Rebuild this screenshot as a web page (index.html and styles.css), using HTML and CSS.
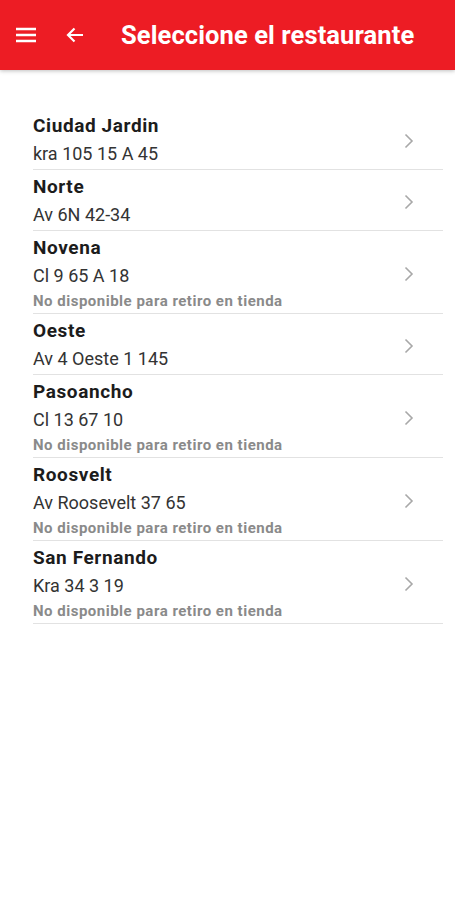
FILE: index.html
```html
<!DOCTYPE html>
<html lang="es">
<head>
  <meta charset="UTF-8">
  <meta name="viewport" content="width=device-width, initial-scale=1.0">
  <title>Seleccione el restaurante</title>
  <link rel="stylesheet" href="styles.css">
</head>
<body>
  <header class="topbar">
    <svg class="icon menu" width="20" height="16" viewBox="0 0 20 16">
      <path d="M0 2h20M0 8h20M0 14h20" stroke="#fff" stroke-width="2.4"/>
    </svg>
    <svg class="icon back" width="18" height="16" viewBox="0 0 18 16">
      <path d="M17 8H2M8.5 1.5L2 8l6.5 6.5" stroke="#fff" stroke-width="2.2" fill="none"/>
    </svg>
    <h1>Seleccione el restaurante</h1>
  </header>

  <ul class="list">
    <li class="item">
      <div class="info">
        <div class="name">Ciudad Jardin</div>
        <div class="address">kra 105 15 A 45</div>
      </div>
      <svg class="chevron" width="10" height="16" viewBox="0 0 10 16"><path d="M1.5 1.5L8 8l-6.5 6.5" fill="none" stroke="#a8a8a8" stroke-width="1.6"/></svg>
    </li>
    <li class="item">
      <div class="info">
        <div class="name">Norte</div>
        <div class="address">Av 6N 42-34</div>
      </div>
      <svg class="chevron" width="10" height="16" viewBox="0 0 10 16"><path d="M1.5 1.5L8 8l-6.5 6.5" fill="none" stroke="#a8a8a8" stroke-width="1.6"/></svg>
    </li>
    <li class="item">
      <div class="info">
        <div class="name">Novena</div>
        <div class="address">Cl 9 65 A 18</div>
        <div class="note">No disponible para retiro en tienda</div>
      </div>
      <svg class="chevron" width="10" height="16" viewBox="0 0 10 16"><path d="M1.5 1.5L8 8l-6.5 6.5" fill="none" stroke="#a8a8a8" stroke-width="1.6"/></svg>
    </li>
    <li class="item">
      <div class="info">
        <div class="name">Oeste</div>
        <div class="address">Av 4 Oeste 1 145</div>
      </div>
      <svg class="chevron" width="10" height="16" viewBox="0 0 10 16"><path d="M1.5 1.5L8 8l-6.5 6.5" fill="none" stroke="#a8a8a8" stroke-width="1.6"/></svg>
    </li>
    <li class="item">
      <div class="info">
        <div class="name">Pasoancho</div>
        <div class="address">Cl 13 67 10</div>
        <div class="note">No disponible para retiro en tienda</div>
      </div>
      <svg class="chevron" width="10" height="16" viewBox="0 0 10 16"><path d="M1.5 1.5L8 8l-6.5 6.5" fill="none" stroke="#a8a8a8" stroke-width="1.6"/></svg>
    </li>
    <li class="item">
      <div class="info">
        <div class="name">Roosvelt</div>
        <div class="address">Av Roosevelt 37 65</div>
        <div class="note">No disponible para retiro en tienda</div>
      </div>
      <svg class="chevron" width="10" height="16" viewBox="0 0 10 16"><path d="M1.5 1.5L8 8l-6.5 6.5" fill="none" stroke="#a8a8a8" stroke-width="1.6"/></svg>
    </li>
    <li class="item">
      <div class="info">
        <div class="name">San Fernando</div>
        <div class="address">Kra 34 3 19</div>
        <div class="note">No disponible para retiro en tienda</div>
      </div>
      <svg class="chevron" width="10" height="16" viewBox="0 0 10 16"><path d="M1.5 1.5L8 8l-6.5 6.5" fill="none" stroke="#a8a8a8" stroke-width="1.6"/></svg>
    </li>
  </ul>
</body>
</html>
```

FILE: styles.css
```css
body {
  margin: 0;
  padding: 0;
  font-family: Roboto, "Noto Sans", Arial, sans-serif;
  background-color: #fff;
  color: #1f1f1f;
}
.topbar {
  height: 70px;
  background-color: #ed1c24;
  display: flex;
  align-items: center;
  padding-left: 16px;
  box-shadow: 0 1px 4px rgba(0, 0, 0, 0.25);
}
.icon {
  display: block;
  flex: none;
}
.menu {
  margin-right: 30px;
}
.back {
  margin-right: 37px;
}
.topbar h1 {
  margin: 0;
  color: #fff;
  font-size: 25.5px;
  font-weight: 700;
  letter-spacing: 0.1px;
}
.list {
  list-style: none;
  margin: 39px 12px 0 33px;
  padding: 0;
}
.item {
  display: flex;
  align-items: center;
  border-bottom: 1px solid #e2e2e2;
  padding: 5px 0 1px;
}
.info {
  flex: 1;
}
.name {
  font-size: 19px;
  font-weight: 700;
  line-height: 24px;
  letter-spacing: 0.6px;
  color: #1c1c1c;
}
.address {
  font-size: 18px;
  line-height: 28px;
  margin-top: 2px;
  color: #333;
}
.note {
  font-size: 15px;
  font-weight: 700;
  line-height: 22px;
  letter-spacing: 0.5px;
  color: #8a8a8a;
}
.chevron {
  flex: none;
  margin-right: 29px;
}
```
